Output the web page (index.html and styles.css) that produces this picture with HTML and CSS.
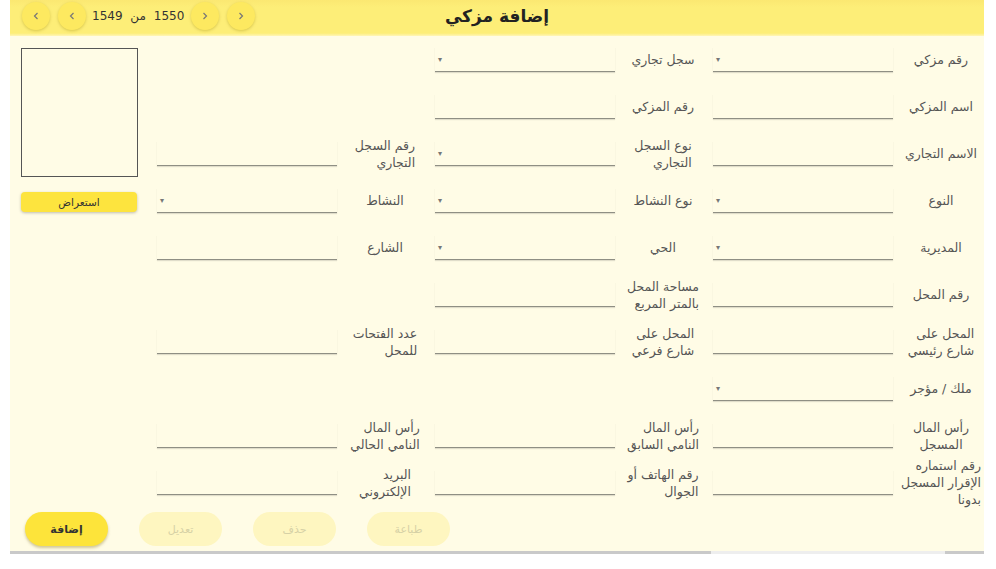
FILE: index.html
```html
<!DOCTYPE html>
<html lang="ar">
<head>
    <meta charset="UTF-8">
    <meta name="viewport" content="width=device-width, initial-scale=1.0">
    <title>إضافة مزكي</title>
    <link rel="stylesheet" href="styles.css">
</head>
<body>
    <div class="page">
        <header class="topbar">
            <div class="pager">
                <span class="circle"><svg width="6" height="8" viewBox="0 0 6 8"><polyline points="4.5,1 1.5,4 4.5,7" /></svg></span>
                <span class="circle"><svg width="6" height="8" viewBox="0 0 6 8"><polyline points="4.5,1 1.5,4 4.5,7" /></svg></span>
                <span class="counter" dir="rtl">1550 من 1549</span>
                <span class="circle"><svg width="6" height="8" viewBox="0 0 6 8"><polyline points="1.5,1 4.5,4 1.5,7" /></svg></span>
                <span class="circle"><svg width="6" height="8" viewBox="0 0 6 8"><polyline points="1.5,1 4.5,4 1.5,7" /></svg></span>
            </div>
            <h1 class="title">إضافة مزكي</h1>
            <div></div>
        </header>

        <main class="sheet" dir="rtl">
            <div class="form">
                <div class="fields">
                    <!-- row 1 -->
                    <div class="field"><label><span>رقم مزكي</span></label><div class="line select"><i>▾</i></div></div>
                    <div class="field"><label><span>سجل تجاري</span></label><div class="line select"><i>▾</i></div></div>
                    <div class="field"></div>
                    <!-- row 2 -->
                    <div class="field"><label><span>اسم المزكي</span></label><div class="line"></div></div>
                    <div class="field"><label><span>رقم المزكي</span></label><div class="line"></div></div>
                    <div class="field"></div>
                    <!-- row 3 -->
                    <div class="field"><label><span>الاسم التجاري</span></label><div class="line"></div></div>
                    <div class="field"><label><span>نوع السجل<br>التجاري</span></label><div class="line select"><i>▾</i></div></div>
                    <div class="field"><label><span>رقم السجل<br>التجاري</span></label><div class="line"></div></div>
                    <!-- row 4 -->
                    <div class="field"><label><span>النوع</span></label><div class="line select"><i>▾</i></div></div>
                    <div class="field"><label><span>نوع النشاط</span></label><div class="line select"><i>▾</i></div></div>
                    <div class="field"><label><span>النشاط</span></label><div class="line select"><i>▾</i></div></div>
                    <!-- row 5 -->
                    <div class="field"><label><span>المديرية</span></label><div class="line select"><i>▾</i></div></div>
                    <div class="field"><label><span>الحي</span></label><div class="line select"><i>▾</i></div></div>
                    <div class="field"><label><span>الشارع</span></label><div class="line"></div></div>
                    <!-- row 6 -->
                    <div class="field"><label><span>رقم المحل</span></label><div class="line"></div></div>
                    <div class="field"><label><span>مساحة المحل<br>بالمتر المربع</span></label><div class="line"></div></div>
                    <div class="field"></div>
                    <!-- row 7 -->
                    <div class="field"><label><span>المحل على<br>شارع رئيسي</span></label><div class="line"></div></div>
                    <div class="field"><label><span>المحل على<br>شارع فرعي</span></label><div class="line"></div></div>
                    <div class="field"><label><span>عدد الفتحات<br>للمحل</span></label><div class="line"></div></div>
                    <!-- row 8 -->
                    <div class="field"><label><span>ملك / مؤجر</span></label><div class="line select"><i>▾</i></div></div>
                    <div class="field"></div>
                    <div class="field"></div>
                    <!-- row 9 -->
                    <div class="field"><label><span class="mid">رأس المال<br>المسجل</span></label><div class="line"></div></div>
                    <div class="field"><label><span>رأس المال<br>النامي السابق</span></label><div class="line"></div></div>
                    <div class="field"><label><span>رأس المال<br>النامي الحالي</span></label><div class="line"></div></div>
                    <!-- row 10 -->
                    <div class="field"><label><span>رقم استماره<br>الإقرار المسجل<br>بدونا</span></label><div class="line"></div></div>
                    <div class="field"><label><span>رقم الهاتف أو<br>الجوال</span></label><div class="line"></div></div>
                    <div class="field"><label><span>البريد<br>الإلكتروني</span></label><div class="line"></div></div>
                </div>

                <div class="side" dir="ltr">
                    <div class="photo"></div>
                    <button class="browse">استعراض</button>
                </div>
            </div>

            <div class="actions" dir="ltr">
                <button class="btn">إضافة</button>
                <button class="btn off">تعديل</button>
                <button class="btn off">حذف</button>
                <button class="btn off">طباعة</button>
            </div>
        </main>
        <div class="scrollbar"></div>
    </div>
</body>
</html>
```

FILE: styles.css
```css
body {
    margin: 0;
    padding: 0;
    background: #ffffff;
    font-family: 'DejaVu Sans', sans-serif;
    color: #555;
}
.page {
    width: 974px;
    margin-left: 10px;
}
.topbar {
    height: 36px;
    display: grid;
    grid-template-columns: 1fr auto 1fr;
    align-items: center;
    background: linear-gradient(#fbe872, #fdee78 20%, #fdee78 92%, #fff6b8);
}
.pager {
    display: flex;
    align-items: center;
    gap: 8px;
    padding-left: 12px;
    padding-bottom: 4px;
}
.circle {
    width: 28px;
    height: 28px;
    border-radius: 50%;
    background: #fde960;
    box-shadow: 0 1px 3px rgba(150, 130, 0, 0.35);
    display: flex;
    align-items: center;
    justify-content: center;
}
.circle svg polyline {
    fill: none;
    stroke: #777;
    stroke-width: 1.2;
}
.counter {
    font-size: 12px;
    color: #333;
    margin: 0 -1px 0 -2px;
    word-spacing: 4px;
}
.title {
    margin: 0;
    font-size: 17px;
    font-weight: bold;
    color: #222;
    padding-bottom: 4px;
}
.sheet {
    background: #fffce6;
    padding-bottom: 5px;
}
.form {
    display: flex;
}
.fields {
    display: grid;
    grid-template-columns: repeat(3, 270px);
    grid-auto-rows: 47px;
    column-gap: 8px;
    padding-right: 1px;
}
.field {
    display: flex;
    align-items: center;
}
.field label {
    width: 84px;
    padding-left: 6px;
    display: flex;
    justify-content: center;
    font-size: 12.5px;
    line-height: 17px;
}
.field label span {
    display: block;
    text-align: right;
    white-space: nowrap;
}
.field label .mid {
    text-align: center;
}
.line {
    width: 180px;
    height: 24px;
    border-bottom: 1px solid #8f8f84;
    box-shadow: 0 1px 1px rgba(0, 0, 0, 0.12);
    display: flex;
    align-items: center;
    justify-content: flex-end;
}
.line i {
    font-style: normal;
    font-size: 8px;
    color: #777;
    padding-left: 3px;
}
.side {
    flex: 1;
    display: flex;
    flex-direction: column;
    align-items: flex-start;
    padding: 12px 0 0 11px;
}
.photo {
    width: 115px;
    height: 127px;
    border: 1px solid #555;
}
.browse {
    margin-top: 15px;
    width: 116px;
    height: 20px;
    border: none;
    border-radius: 4px;
    background: #fde43e;
    box-shadow: 0 1px 3px rgba(0, 0, 0, 0.25);
    font-family: inherit;
    font-size: 10.5px;
    color: #333;
    padding: 0;
}
.actions {
    display: flex;
    gap: 31px;
    padding-left: 15px;
    margin-top: 6px;
}
.btn {
    width: 83px;
    height: 34px;
    border: none;
    border-radius: 17px;
    background: #fde43a;
    box-shadow: 0 2px 3px rgba(120, 100, 0, 0.35);
    font-family: inherit;
    font-size: 11px;
    font-weight: bold;
    color: #333;
    padding: 0;
}
.btn.off {
    background: #fef6c0;
    box-shadow: none;
    color: #d6d1a6;
    font-weight: normal;
}
.scrollbar {
    height: 3px;
    background: linear-gradient(to right, #c9c9c9 0, #c9c9c9 72%, #eeeeee 72%, #eeeeee 96%, #c9c9c9 96%);
}
```
